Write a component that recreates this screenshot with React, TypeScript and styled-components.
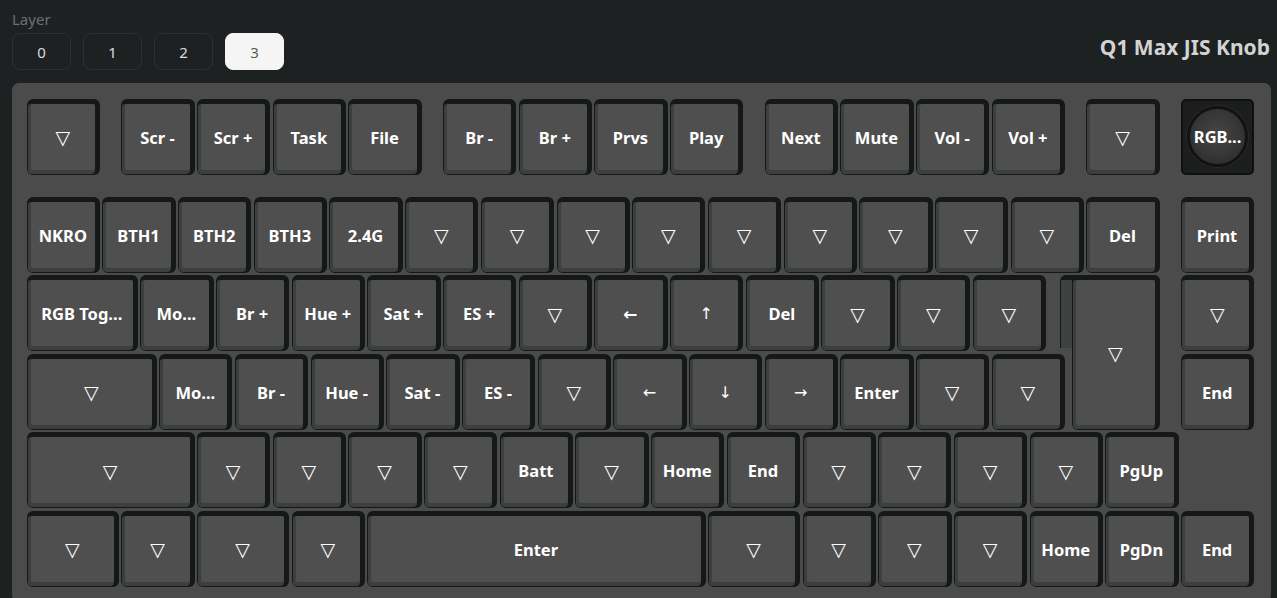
import styled, { createGlobalStyle } from "styled-components";

const U = 75.7;
const KEY_H = 76;
const KEY_GAP = 2.4;
const ROW_GAP = 2.5;
const TRI = "▽";

type KeyDef = {
  label: string;
  w?: number;
  gap?: number;
  knob?: boolean;
  arrow?: "bold" | "thin";
};

const k = (label: string, w = 1, gap = 0): KeyDef => ({ label, w, gap });
const t = (n: number): KeyDef[] => Array.from({ length: n }, () => k(TRI));
const arrow = (label: string, kind: "bold" | "thin"): KeyDef => ({ label, arrow: kind });

const row1: KeyDef[] = [
  k(TRI),
  k("Scr -", 1, 0.25), k("Scr +"), k("Task"), k("File"),
  k("Br -", 1, 0.25), k("Br +"), k("Prvs"), k("Play"),
  k("Next", 1, 0.25), k("Mute"), k("Vol -"), k("Vol +"),
  k(TRI, 1, 0.25),
  { label: "RGB...", gap: 0.25, knob: true },
];

const row2: KeyDef[] = [
  k("NKRO"), k("BTH1"), k("BTH2"), k("BTH3"), k("2.4G"),
  ...t(9),
  k("Del"),
  k("Print", 1, 0.25),
];

const row3: KeyDef[] = [
  k("RGB Tog...", 1.5), k("Mo..."), k("Br +"), k("Hue +"), k("Sat +"), k("ES +"),
  k(TRI), arrow("←", "bold"), arrow("↑", "thin"), k("Del"), ...t(3),
];

const row4: KeyDef[] = [
  k(TRI, 1.75), k("Mo..."), k("Br -"), k("Hue -"), k("Sat -"), k("ES -"),
  k(TRI), arrow("←", "thin"), arrow("↓", "thin"), arrow("→", "thin"), k("Enter"), ...t(2),
];

const row5: KeyDef[] = [
  k(TRI, 2.25), ...t(4), k("Batt"), k(TRI), k("Home"), k("End"), ...t(4), k("PgUp"),
];

const row6: KeyDef[] = [
  k(TRI, 1.25), k(TRI), k(TRI, 1.25), k(TRI), k("Enter", 4.5),
  k(TRI, 1.25), ...t(3), k("Home"), k("PgDn"), k("End"),
];

const GlobalStyle = createGlobalStyle`
  html, body {
    margin: 0;
    padding: 0;
    background: #1e2122;
  }
  body {
    font-family: "Noto Sans", "DejaVu Sans", sans-serif;
    overflow: hidden;
  }
`;

const Page = styled.div`
  min-height: 100vh;
  padding: 9px 6px 0 12px;
  box-sizing: border-box;
`;

const Header = styled.div`
  display: flex;
  justify-content: space-between;
  align-items: center;
  padding-right: 1px;
`;

const LayerLabel = styled.div`
  color: #6b6f71;
  font-size: 15px;
  line-height: 20px;
  margin-bottom: 4px;
`;

const LayerButtons = styled.div`
  display: flex;
  gap: 12px;
`;

const LayerButton = styled.button<{ $active?: boolean }>`
  width: 59px;
  height: 37px;
  border-radius: 8px;
  border: 1px solid ${(p) => (p.$active ? "#f5f5f5" : "#2c3031")};
  background: ${(p) => (p.$active ? "#f5f5f5" : "transparent")};
  color: ${(p) => (p.$active ? "#5a5a5a" : "#d6dde2")};
  font-family: "Noto Sans", sans-serif;
  font-size: 15px;
  padding: 0;
`;

const Title = styled.h1`
  margin: 15px 0 0;
  color: #d3d3d3;
  font-size: 21px;
  font-weight: 700;
`;

const Board = styled.div`
  margin-top: 13px;
  background: #4b4b4b;
  border-radius: 7px;
  padding: 15.5px 15px 15px 14.7px;
  display: flex;
  flex-direction: column;
  gap: ${ROW_GAP}px;
`;

const Row = styled.div<{ $after?: number }>`
  display: flex;
  gap: ${KEY_GAP}px;
  height: ${KEY_H}px;
  margin-bottom: ${(p) => p.$after ?? 0}px;
`;

const Block = styled.div`
  display: flex;
  gap: ${KEY_GAP}px;
`;

const Stack = styled.div<{ $w?: number; $gap?: number }>`
  display: flex;
  flex-direction: column;
  gap: ${ROW_GAP}px;
  flex: none;
  width: ${(p) => (p.$w ? `${p.$w}px` : "auto")};
  margin-left: ${(p) => (p.$gap ?? 0) * U}px;
`;

const Key = styled.div<{ $w: number; $gap: number }>`
  flex: none;
  box-sizing: border-box;
  width: ${(p) => p.$w * U - KEY_GAP}px;
  height: ${KEY_H}px;
  margin-left: ${(p) => p.$gap * U}px;
  background: #151819;
  border-radius: 6px;
  padding: 5px 5px 1px 1px;
`;

const Bevel = styled.div`
  height: 100%;
  box-sizing: border-box;
  background: #3c3f3f;
  border-radius: 3px 2px 4px 4px;
  padding: 0 0 4px 3px;
`;

const Face = styled.div`
  height: 100%;
  background: #4f4f4f;
  border-radius: 2px;
  display: flex;
  align-items: center;
  justify-content: center;
  color: #ffffff;
  font-size: 16.5px;
  font-weight: 700;
  white-space: nowrap;
  padding-top: 1px;
  box-sizing: border-box;
`;

const Tri = styled.span`
  font-family: "DejaVu Sans", sans-serif;
  font-weight: 400;
  font-size: 19px;
`;

const Arrow = styled.span<{ $bold?: boolean }>`
  font-family: "DejaVu Sans", sans-serif;
  font-weight: ${(p) => (p.$bold ? 700 : 400)};
  font-size: ${(p) => (p.$bold ? 17 : 16)}px;
`;

const KnobKey = styled.div<{ $gap: number }>`
  flex: none;
  box-sizing: border-box;
  width: ${U - KEY_GAP}px;
  height: ${KEY_H}px;
  margin-left: ${(p) => p.$gap * U}px;
  background: #1c1d1d;
  border: 2px solid #0f1011;
  border-radius: 5px;
  display: flex;
  align-items: center;
  justify-content: center;
`;

const Knob = styled.div`
  width: 61px;
  height: 61px;
  border-radius: 50%;
  box-sizing: border-box;
  border: 3px solid #111212;
  background: radial-gradient(circle at 50% 45%, #454545 0%, #363636 55%, #262626 100%);
  box-shadow: 0 0 0 1px #2a2b2b;
  display: flex;
  align-items: center;
  justify-content: center;
  color: #ffffff;
  font-size: 16.5px;
  font-weight: 700;
`;

const IsoEnter = styled.div`
  position: relative;
  flex: none;
  width: ${1.35 * U - KEY_GAP}px;
  height: ${KEY_H * 2 + ROW_GAP}px;
`;

const EnterTop = styled.div`
  position: absolute;
  left: 0;
  top: 0;
  right: 0;
  height: 73px;
  box-sizing: border-box;
  background: #151819;
  border-radius: 6px 6px 0 0;
  padding: 5px 0 0 1px;
`;

const EnterTopFill = styled.div`
  height: 100%;
  background: #3e4141;
`;

const EnterBottom = styled.div`
  position: absolute;
  right: 0;
  top: 0;
  bottom: 0;
  width: 88px;
  box-sizing: border-box;
  background: #151819;
  border-radius: 6px;
  padding: 5px 5px 1px 1px;
`;

function Label({ def }: { def: KeyDef }) {
  if (def.label === TRI) return <Tri>{TRI}</Tri>;
  if (def.arrow) return <Arrow $bold={def.arrow === "bold"}>{def.label}</Arrow>;
  return <>{def.label}</>;
}

function Keycap({ def }: { def: KeyDef }) {
  if (def.knob) {
    return (
      <KnobKey $gap={def.gap ?? 0}>
        <Knob>{def.label}</Knob>
      </KnobKey>
    );
  }
  return (
    <Key $w={def.w ?? 1} $gap={def.gap ?? 0}>
      <Bevel>
        <Face>
          <Label def={def} />
        </Face>
      </Bevel>
    </Key>
  );
}

function KeyRow({ keys, after }: { keys: KeyDef[]; after?: number }) {
  return (
    <Row $after={after}>
      {keys.map((def, i) => (
        <Keycap key={i} def={def} />
      ))}
    </Row>
  );
}

export default function App() {
  return (
    <Page>
      <GlobalStyle />
      <Header>
        <div>
          <LayerLabel>Layer</LayerLabel>
          <LayerButtons>
            {[0, 1, 2, 3].map((n) => (
              <LayerButton key={n} $active={n === 3}>
                {n}
              </LayerButton>
            ))}
          </LayerButtons>
        </div>
        <Title>Q1 Max JIS Knob</Title>
      </Header>

      <Board>
        <KeyRow keys={row1} after={0.25 * (KEY_H + ROW_GAP)} />
        <KeyRow keys={row2} />
        <Block>
          <Stack $w={13.65 * U - KEY_GAP}>
            <KeyRow keys={row3} />
            <KeyRow keys={row4} />
          </Stack>
          <IsoEnter>
            <EnterTop>
              <EnterTopFill />
            </EnterTop>
            <EnterBottom>
              <Bevel>
                <Face>
                  <Tri>{TRI}</Tri>
                </Face>
              </Bevel>
            </EnterBottom>
          </IsoEnter>
          <Stack $gap={0.25}>
            <KeyRow keys={[k(TRI)]} />
            <KeyRow keys={[k("End")]} />
          </Stack>
        </Block>
        <KeyRow keys={row5} />
        <KeyRow keys={row6} />
      </Board>
    </Page>
  );
}
